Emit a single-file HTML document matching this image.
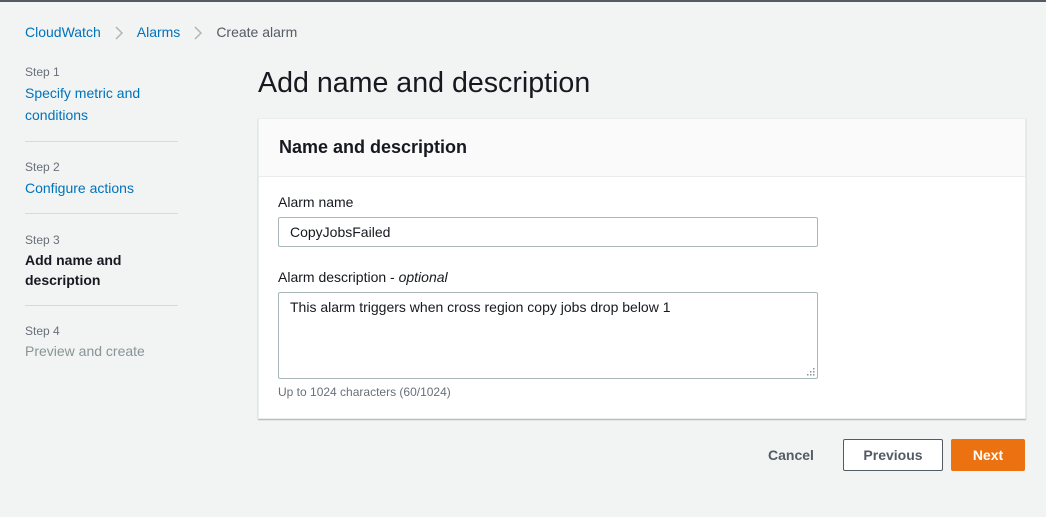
<!DOCTYPE html>
<html><head><style>
*{box-sizing:border-box;margin:0;padding:0}
body{width:1046px;height:517px;background:#f2f3f3;font-family:"Liberation Sans",sans-serif;color:#16191f;position:relative;overflow:hidden}
.a{position:absolute;white-space:nowrap}
.link{color:#0073bb}
.step{font-size:12px;color:#687078}
.nav{font-size:14px;line-height:22px}
.hr{position:absolute;left:25px;width:153px;height:1px;background:#d5dbdb}
.panel{position:absolute;left:258px;top:118px;width:768px;height:301px;background:#fff;border:1px solid #eaeded;box-shadow:0 1px 1px rgba(0,28,36,.3)}
.ph{height:58px;background:#fafafa;border-bottom:1px solid #eaeded;padding:18px 20px;font-size:18px;font-weight:bold}
.inp{position:absolute;border:1px solid #aab7b8;border-radius:2px;background:#fff;font-size:14px;padding:6px 11px}
.btn{position:absolute;font-size:14px;font-weight:bold;text-align:center;line-height:30px;border-radius:2px}
.chev{display:inline-block;vertical-align:middle;margin:0 14px 0 14px}
</style></head><body>
<div class="a" style="left:0;top:0;width:1046px;height:2px;background:#545b64"></div>
<div class="a" style="left:25px;top:24px;font-size:14px"><span class="link">CloudWatch</span><svg class="chev" width="8" height="14"><path d="M1 1l6 6-6 6" fill="none" stroke="#aab7b8" stroke-width="1.5"/></svg><span class="link">Alarms</span><svg class="chev" width="8" height="14"><path d="M1 1l6 6-6 6" fill="none" stroke="#aab7b8" stroke-width="1.5"/></svg><span style="color:#545b64">Create alarm</span></div>

<div class="a step" style="left:25px;top:65px">Step 1</div>
<div class="a nav link" style="left:25px;top:82px">Specify metric and<br>conditions</div>
<div class="hr" style="top:141px"></div>
<div class="a step" style="left:25px;top:160px">Step 2</div>
<div class="a nav link" style="left:25px;top:177px">Configure actions</div>
<div class="hr" style="top:213px"></div>
<div class="a step" style="left:25px;top:233px">Step 3</div>
<div class="a nav" style="left:25px;top:250px;font-weight:bold;line-height:20px">Add name and<br>description</div>
<div class="hr" style="top:305px"></div>
<div class="a step" style="left:25px;top:324px">Step 4</div>
<div class="a nav" style="left:25px;top:340px;color:#879596">Preview and create</div>

<div class="a" style="left:258px;top:67px;font-size:28.6px;font-weight:400">Add name and description</div>

<div class="panel">
<div class="ph">Name and description</div>
</div>
<div class="a" style="left:278px;top:194px;font-size:14px">Alarm name</div>
<div class="inp" style="left:278px;top:217px;width:540px;height:30px">CopyJobsFailed</div>
<div class="a" style="left:278px;top:269px;font-size:14px">Alarm description - <i>optional</i></div>
<div class="inp" style="left:278px;top:292px;width:540px;height:87px">This alarm triggers when cross region copy jobs drop below 1
<svg style="position:absolute;right:2px;bottom:2px" width="8" height="8"><g fill="#879596"><rect x="6" y="0" width="1.5" height="1.5"/><rect x="3" y="3" width="1.5" height="1.5"/><rect x="6" y="3" width="1.5" height="1.5"/><rect x="0" y="6" width="1.5" height="1.5"/><rect x="3" y="6" width="1.5" height="1.5"/><rect x="6" y="6" width="1.5" height="1.5"/></g></svg></div>
<div class="a" style="left:278px;top:385px;font-size:12px;color:#687078">Up to 1024 characters (60/1024)</div>

<div class="btn" style="left:760px;top:440px;width:62px;color:#545b64">Cancel</div>
<div class="btn" style="left:843px;top:439px;width:100px;height:32px;border:1px solid #545b64;background:#fff;color:#545b64">Previous</div>
<div class="btn" style="left:951px;top:439px;width:74px;height:32px;background:#ec7211;color:#fff;line-height:32px">Next</div>
</body></html>
